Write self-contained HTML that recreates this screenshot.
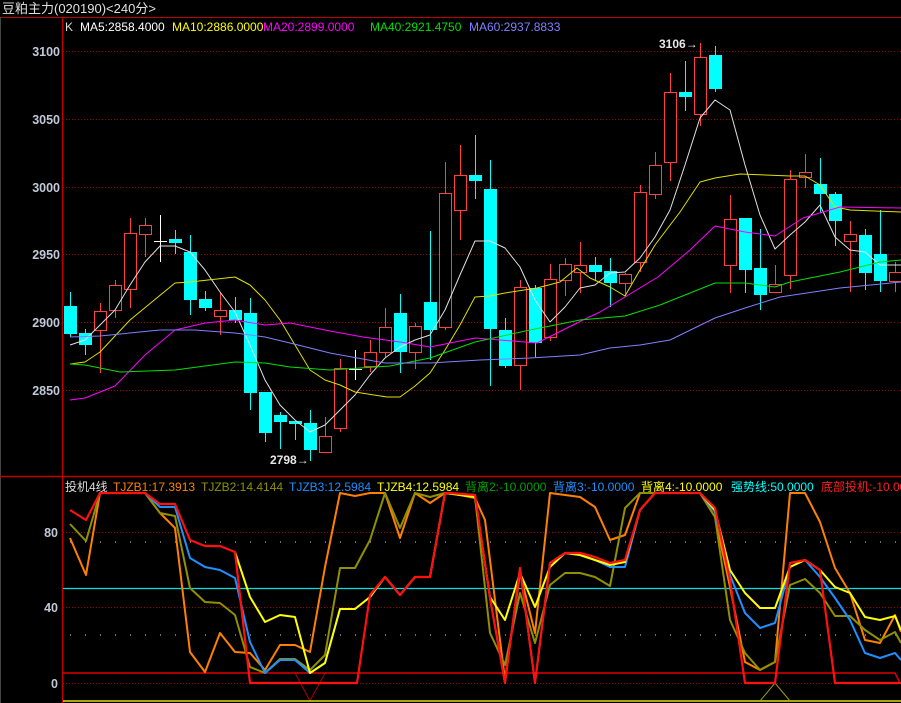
<!DOCTYPE html>
<html><head><meta charset="utf-8"><style>
html,body{margin:0;padding:0;background:#000;width:901px;height:703px;overflow:hidden}
svg{display:block}
text{font-family:"Liberation Sans","Noto Sans CJK SC",sans-serif}
</style></head><body>
<svg id="s" width="901" height="703" xmlns="http://www.w3.org/2000/svg">
<rect width="901" height="703" fill="#000"/>
<text x="2" y="13" fill="#e0e0e0" font-size="13">豆粕主力(020190)&lt;240分&gt;</text>
<line x1="0" y1="17.5" x2="901" y2="17.5" stroke="#c00000"/>
<line x1="62.5" y1="17" x2="62.5" y2="703" stroke="#c00000" stroke-width="1.5"/>
<line x1="0.5" y1="17" x2="0.5" y2="703" stroke="#444"/>
<line x1="0" y1="476.5" x2="901" y2="476.5" stroke="#c00000" stroke-width="1.5"/>
<g stroke="#a00000" stroke-dasharray="1,2">
<line x1="63" y1="51.5" x2="901" y2="51.5"/><line x1="63" y1="119.5" x2="901" y2="119.5"/>
<line x1="63" y1="187.5" x2="901" y2="187.5"/><line x1="63" y1="254.5" x2="901" y2="254.5"/>
<line x1="63" y1="322.5" x2="901" y2="322.5"/><line x1="63" y1="390.5" x2="901" y2="390.5"/>
<line x1="63" y1="532.5" x2="901" y2="532.5"/><line x1="63" y1="607.5" x2="901" y2="607.5"/>
<line x1="63" y1="683.5" x2="901" y2="683.5"/>
</g>
<g stroke="#ddd" stroke-dasharray="1,14">
<line x1="70" y1="542" x2="901" y2="542"/><line x1="70" y1="635" x2="901" y2="635"/>
</g>
<line x1="63" y1="588.5" x2="901" y2="588.5" stroke="#00e0e0" stroke-width="1.2"/>
<g font-size="12.5" font-weight="bold" fill="#c0c8d8" text-anchor="end">
<text x="60" y="56">3100</text><text x="60" y="124">3050</text><text x="60" y="192">3000</text>
<text x="60" y="259">2950</text><text x="60" y="327">2900</text><text x="60" y="395">2850</text>
<text x="58" y="537">80</text><text x="58" y="612">40</text><text x="58" y="688">0</text>
</g>
<g font-size="12">
<text x="65" y="31" fill="#ddd">K</text>
<text x="80" y="31" fill="#fff">MA5:2858.4000</text>
<text x="172" y="31" fill="#ffff00">MA10:2886.0000</text>
<text x="263" y="31" fill="#ff00ff">MA20:2899.0000</text>
<text x="370" y="31" fill="#00e000">MA40:2921.4750</text>
<text x="469" y="31" fill="#8080ff">MA60:2937.8833</text>
</g>
<g font-size="12">
<text x="65" y="491" fill="#ddd">投机4线</text>
<text x="113" y="491" fill="#ff8000">TJZB1:17.3913</text>
<text x="201" y="491" fill="#909000">TJZB2:14.4144</text>
<text x="289" y="491" fill="#1e90ff">TJZB3:12.5984</text>
<text x="377" y="491" fill="#ffff00">TJZB4:12.5984</text>
<text x="465" y="491" fill="#00a000">背离2:-10.0000</text>
<text x="553" y="491" fill="#1e90ff">背离3:-10.0000</text>
<text x="641" y="491" fill="#ffff00">背离4:-10.0000</text>
<text x="731" y="491" fill="#00ffff">强势线:50.0000</text>
<text x="821" y="491" fill="#ff2020">底部投机:-10.0000</text>
</g>
<g font-size="12" font-weight="bold" fill="#e8e8e8">
<text x="659" y="48">3106→</text><text x="270" y="464">2798→</text>
</g>
<g id="c"></g>
<g id="m" fill="none" stroke-width="1"></g>
<g id="l" fill="none" stroke-width="2"></g>
</svg>
<script>
var NS="http://www.w3.org/2000/svg";
function el(p,t,a){var e=document.createElementNS(NS,t);for(var k in a)e.setAttribute(k,a[k]);p.appendChild(e);return e;}
var C=document.getElementById('c');
var d=[[70,306,334,292,337,'c'],[85,333,345,329,355,'c'],[100,311,330,303,373,'r'],[115,285,310,280,318,'r'],[130,233,289,218,308,'r'],[145,225,234,218,257,'r'],[160,241,241,215,262,'w'],[175,239,243,230,254,'c'],[190,252,300,235,315,'c'],[205,299,308,291,311,'c'],[220,310,316,292,335,'r'],[235,310,320,297,323,'c'],[250,313,393,298,410,'c'],[265,392,433,392,442,'c'],[280,415,422,412,449,'c'],[295,421,424,421,440,'c'],[310,423,450,410,461,'c'],[325,436,452,417,453,'r'],[340,368,428,359,432,'r'],[355,369,369,350,380,'w'],[370,352,366,340,372,'r'],[385,327,352,308,357,'r'],[400,313,352,294,373,'c'],[415,326,352,323,369,'r'],[430,302,330,231,360,'c'],[445,193,327,162,330,'r'],[460,175,210,145,240,'r'],[475,175,181,135,199,'c'],[490,189,329,160,386,'c'],[505,330,366,318,368,'c'],[520,287,365,280,390,'r'],[535,288,343,285,357,'c'],[550,279,337,264,341,'r'],[565,264,280,258,296,'r'],[580,265,272,242,293,'r'],[595,265,272,257,281,'c'],[610,271,283,258,307,'c'],[625,274,283,273,296,'r'],[640,192,262,185,272,'r'],[655,165,194,152,199,'r'],[670,92,162,73,181,'r'],[685,92,97,61,111,'c'],[700,57,114,43,126,'r'],[715,55,89,46,92,'c'],[730,219,265,195,293,'r'],[745,218,270,218,293,'c'],[760,268,295,229,310,'c'],[775,284,292,265,293,'r'],[790,179,275,170,289,'r'],[805,172,177,154,188,'r'],[820,184,194,158,213,'c'],[835,194,221,192,246,'c'],[850,234,241,221,292,'r'],[865,235,273,229,290,'c'],[880,254,281,210,292,'c'],[895,272,281,262,292,'r']];
d.forEach(function(a){var x=a[0],col=a[5]=='c'?'#00ffff':a[5]=='r'?'#ff4040':'#ffffff';
el(C,'line',{x1:x+.5,y1:a[3],x2:x+.5,y2:a[4],stroke:col});
if(a[5]=='c'){el(C,'rect',{x:x-6,y:a[1],width:13,height:Math.max(a[2]-a[1],3),fill:col});}
else if(a[5]=='r'){el(C,'rect',{x:x-5.5,y:a[1]+.5,width:12,height:a[2]-a[1],fill:'#000',stroke:col});el(C,'line',{x1:x+.5,y1:a[3],x2:x+.5,y2:a[1],stroke:col});el(C,'line',{x1:x+.5,y1:a[2]+.5,x2:x+.5,y2:a[4],stroke:col});}
else{el(C,'line',{x1:x-6,y1:a[1]+.5,x2:x+7,y2:a[1]+.5,stroke:col});}
});
var M=document.getElementById('m');
function pl(g,pts,col,w){el(g,'polyline',{points:pts,stroke:col,'stroke-width':w||1,fill:'none','stroke-linejoin':'round'});}
pl(M,"70,345 85,340 100,325 115,310 130,285 145,262 160,246 175,246 190,252 205,270 220,292 235,312 250,345 265,380 280,405 295,420 310,432 325,425 340,410 355,395 370,375 385,358 400,347 415,340 430,335 445,310 460,275 475,241 490,241 505,248 520,267 535,300 550,322 565,307 580,288 595,285 610,273 625,272 640,258 655,237 670,210 685,165 700,118 715,100 730,110 745,165 760,215 775,249 790,235 805,222 820,205 835,237 850,250 865,252 880,265 901,265","#e0e0e0");
pl(M,"70,364 85,362 100,352 130,320 175,283 190,282 235,277 250,285 265,300 280,320 295,345 310,370 325,380 340,385 355,392 387,397 400,397 415,386 430,373 445,350 460,325 475,297 490,296 505,293 537,288 560,282 577,268 590,278 610,287 625,296 640,270 655,245 680,212 700,182 715,178 740,174 790,176 805,176 820,185 835,207 850,210 901,212","#e0e000");
pl(M,"70,400 85,398 115,386 145,355 175,330 205,323 235,320 265,325 290,323 330,331 363,337 400,342 430,347 475,338 537,343 557,333 583,320 600,312 625,297 658,277 690,250 715,226 745,232 775,236 803,218 840,207 901,208","#ff00ff");
pl(M,"70,364 85,365 120,372 175,370 235,362 265,363 290,367 330,370 390,366 430,358 475,342 530,330 580,320 625,316 660,305 715,283 745,283 775,287 790,282 840,272 880,262 901,260","#00e000");
pl(M,"70,337 100,336 160,330 195,330 235,333 265,337 290,343 330,353 385,363 430,363 480,360 530,358 580,355 610,348 640,345 670,340 715,318 745,308 780,297 840,288 901,282","#8080ff");
var L=document.getElementById('l');
el(L,'polyline',{points:"63,673 895,673 900,683",stroke:'#e00000','stroke-width':1.5,fill:'none'});
el(L,'polyline',{points:"295,673 310,701 325,673",stroke:'#b00000','stroke-width':1,fill:'none'});
el(L,'line',{x1:63,y1:701,x2:901,y2:701,stroke:'#e0e000','stroke-width':1.5});
el(L,'polyline',{points:"760,701 775,683 790,701",stroke:'#a0a000','stroke-width':1,fill:'none'});
pl(L,"70,538 86,575 100,493 145,493 160,513 175,528 190,652 205,672 220,633 235,652 250,653 265,670 280,645 295,645 310,652 325,567 340,493 355,496 370,493 385,493 400,538 415,493 430,503 445,493 450,493 475,498 485,520 505,680 520,573 535,633 550,493 580,497 595,507 610,540 625,535 640,493 700,493 715,517 730,587 745,662 760,670 775,662 790,493 805,493 820,522 835,568 850,593 865,640 880,643 895,615 901,632","#ff8000",2);
pl(L,"70,524 86,541 100,493 145,493 160,513 175,516 190,588 205,602 220,603 235,615 250,667 265,673 280,659 295,659 310,670 325,655 340,568 355,568 370,540 385,493 400,528 415,493 430,497 445,493 475,497 490,633 505,665 520,593 535,643 550,585 565,573 580,573 595,577 610,586 625,508 640,493 700,493 715,517 730,620 745,653 760,670 775,662 790,585 805,579 820,593 835,616 850,616 865,630 880,640 895,632 901,643","#909000",2);
pl(L,"100,493 145,493 160,507 175,507 190,558 205,567 220,570 235,578 250,642 265,673 280,660 295,660 310,673 325,663 340,609 355,609 370,597 385,577 400,595 415,577 430,577 445,493 475,495 490,598 505,683 520,568 535,683 550,563 565,553 580,555 595,560 610,567 625,567 640,510 655,493 700,493 715,512 730,575 745,613 760,628 775,623 790,567 805,560 820,577 835,598 850,620 865,653 880,658 895,653 901,660","#1e90ff",2);
pl(L,"235,552 250,597 265,622 280,615 295,617 310,673 325,663 340,609 355,609 370,597 385,577 400,595 415,577 430,577 445,493 475,497 490,597 505,620 520,573 535,607 550,567 565,553 580,555 595,560 610,565 625,562 640,510 655,493 700,493 715,510 730,570 745,593 760,608 775,608 790,567 805,560 820,570 835,587 850,593 865,617 880,620 895,616 901,630","#ffff00",2);
pl(L,"70,510 86,520 100,493 145,493 160,504 175,504 190,540 205,546 220,546 235,552 250,683 357,683 370,595 385,577 400,595 415,577 430,577 445,493 450,493 475,495 490,598 505,683 520,568 535,683 550,563 565,553 580,553 595,557 610,563 625,560 640,510 655,493 700,493 715,508 730,580 745,683 775,683 790,563 805,560 820,570 835,683 901,683","#ff1010",2.2);
</script>
</body></html>
